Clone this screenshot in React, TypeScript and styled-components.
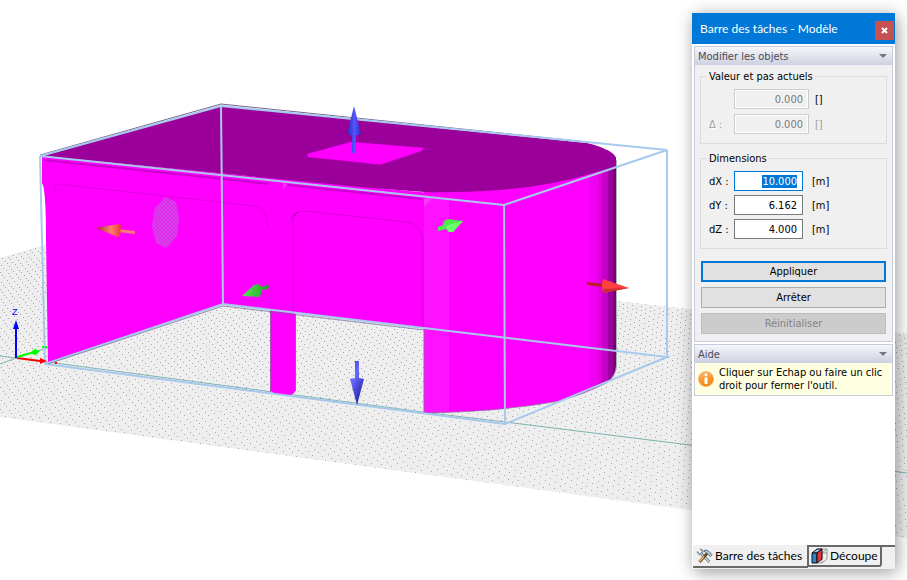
import { useEffect, useRef } from "react";
import styled, { createGlobalStyle, css } from "styled-components";

const GlobalStyle = createGlobalStyle`
  *, *::before, *::after { box-sizing: border-box; }
  html, body, #root { height: 100%; }
  body { margin: 0; background: #fff; overflow: hidden; }
`;

const uiFont = css`
  font-family: "DejaVu Sans Condensed", "Noto Sans", sans-serif;
  font-size: 11px;
  line-height: 13px;
`;

const titleFont = css`
  font-family: Lato, "Open Sans", sans-serif;
  font-size: 12px;
  line-height: 16px;
`;

/* ---------- Layout ---------- */

const Workspace = styled.main`
  position: relative;
  height: 100vh;
  min-height: 480px;
  overflow: hidden;
  background: #fff;
`;

const Scene = styled.svg`
  display: block;
  width: 100%;
  height: 100%;
`;

const ToolWindow = styled.aside`
  ${uiFont}
  position: absolute;
  top: 13px;
  right: 12px;
  bottom: 11px;
  width: 203px;
  display: flex;
  flex-direction: column;
  background: #fff;
  color: #000;
  box-shadow: 2px 3px 16px rgba(0, 0, 0, 0.4);
`;

const TitleBar = styled.header`
  ${titleFont}
  flex: none;
  display: flex;
  align-items: center;
  justify-content: space-between;
  height: 31px;
  padding: 0 1px 0 8px;
  background: #0078d7;
  color: #fff;
`;

const Title = styled.h1`
  margin: 0;
  font: inherit;
  white-space: nowrap;
`;

const CloseButton = styled.button`
  display: grid;
  place-items: center;
  width: 19px;
  height: 19px;
  margin-top: 3px;
  padding: 0;
  border: 0;
  background: #c75050;
`;

const Sections = styled.div`
  flex: 1;
  display: flex;
  flex-direction: column;
  gap: 2px;
  padding: 2px 2px 0;
`;

const Section = styled.section`
  border: 1px solid #c8cbdc;
  background: #f0f0f0;
`;

const SectionHeader = styled.button`
  ${uiFont}
  display: flex;
  align-items: center;
  justify-content: space-between;
  width: 100%;
  height: 18px;
  padding: 0 5px 0 3px;
  border: 0;
  background: linear-gradient(#f6f7fb, #cdd1e0);
  color: #4a4a55;
`;

const Chevron = styled.span`
  border: 4px solid transparent;
  border-top-color: #77777f;
  border-bottom: 0;
`;

const Form = styled.form`
  display: flex;
  flex-direction: column;
  padding: 5px 5px 7px;
`;

const Group = styled.fieldset<{ $rowGap: number }>`
  display: grid;
  grid-template-columns: 25px max-content 1fr;
  align-items: center;
  row-gap: ${(p) => p.$rowGap}px;
  min-width: 0;
  margin: 0 0 8px;
  padding: 6px 8px 9px;
  border: 1px solid #dcdcdc;
`;

const Legend = styled.legend`
  margin-left: -2px;
  padding: 0 2px;
`;

const FieldLabel = styled.label<{ $muted?: boolean }>`
  color: ${(p) => (p.$muted ? "#a0a0a0" : "#000")};
  text-shadow: ${(p) => (p.$muted ? "1px 1px #fff" : "none")};
`;

const Unit = styled.span<{ $muted?: boolean; $near?: boolean }>`
  padding-left: ${(p) => (p.$near ? 6 : 9)}px;
  color: ${(p) => (p.$muted ? "#a0a0a0" : "#000")};
`;

const NumberBox = styled.input<{ $wide?: boolean }>`
  ${uiFont}
  width: ${(p) => (p.$wide ? 75 : 69)}px;
  height: 20px;
  padding: 0 5px;
  border: 1px solid #7a7a7a;
  border-radius: 0;
  outline: 0;
  background: #fff;
  color: #000;
  text-align: right;

  &:focus { border-color: #0078d7; }
  &::selection { background: #0078d7; color: #fff; }
  &:disabled {
    border-color: #ccc;
    background: #f0f0f0;
    box-shadow: inset 0 0 0 1px #fff;
    color: #7a7a7a;
  }
`;

const Actions = styled.div`
  display: flex;
  flex-direction: column;
  gap: 5px;
  padding: 4px 1px 0;
`;

const ActionButton = styled.button<{ $primary?: boolean }>`
  ${uiFont}
  height: 21px;
  padding: 0;
  border: ${(p) => (p.$primary ? "2px solid #0078d7" : "1px solid #adadad")};
  background: #e1e1e1;
  color: #000;

  &:disabled { border-color: #bfbfbf; background: #ccc; color: #838383; }
`;

const Hint = styled.p`
  display: flex;
  align-items: center;
  gap: 5px;
  margin: 0;
  padding: 3px;
  background: #ffffe1;
  white-space: nowrap;
`;

const Tabs = styled.nav`
  ${titleFont}
  flex: none;
  display: flex;
  align-items: flex-start;
  height: 24px;
  padding-left: 1px;
  background: linear-gradient(90deg, #fff 1px, #f0f0f0 1px);
`;

const Tab = styled.button<{ $active?: boolean }>`
  ${titleFont}
  display: flex;
  align-items: center;
  gap: 2px;
  height: ${(p) => (p.$active ? 23 : 22)}px;
  padding: ${(p) => (p.$active ? "0 5px 0 3px" : "0 2px")};
  border: 1px solid #696969;
  border-width: ${(p) => (p.$active ? "0 1px 2px 0" : "2px 2px 2px 1px")};
  border-radius: ${(p) => (p.$active ? "0" : "0 0 3px 0")};
  background: #f0f0f0;
  color: #000;
  white-space: nowrap;
`;

const TabRule = styled.span`
  flex: 1;
  border-top: 2px solid #696969;
`;

/* ---------- Ground grid ---------- */

type Point = [number, number];

const baseCorners: Point[] = [
  [45, 364],
  [505, 424],
  [667, 357],
  [223, 304],
];

/* Projects plan coordinates (unit square = footprint of the box) to the view. */
function makeProjection([p0, p1, p2, p3]: Point[]) {
  const dx1 = p1[0] - p2[0], dy1 = p1[1] - p2[1];
  const dx2 = p3[0] - p2[0], dy2 = p3[1] - p2[1];
  const sx = p0[0] - p1[0] + p2[0] - p3[0];
  const sy = p0[1] - p1[1] + p2[1] - p3[1];
  const det = dx1 * dy2 - dx2 * dy1;
  const g = (sx * dy2 - dx2 * sy) / det;
  const h = (dx1 * sy - sx * dy1) / det;
  return (u: number, v: number): Point => {
    const w = g * u + h * v + 1;
    return [
      ((p1[0] - p0[0] + g * p1[0]) * u + (p3[0] - p0[0] + h * p3[0]) * v + p0[0]) / w,
      ((p1[1] - p0[1] + g * p1[1]) * u + (p3[1] - p0[1] + h * p3[1]) * v + p0[1]) / w,
    ];
  };
}

const project = makeProjection(baseCorners);

function gridDots() {
  let path = "";
  for (let i = -75; i <= 135; i++) {
    for (let j = -55; j <= 95; j++) {
      const [x, y] = project(i / 50, j / 30.81);
      if (x > -2 && x < 910 && y > 236 && y < 545) {
        path += `M${Math.round(x)} ${Math.round(y)}h1v1h-1z`;
      }
    }
  }
  return path;
}

const dots = gridDots();

/* ---------- Drawings ---------- */

function Viewport() {
  return (
    <Scene viewBox="0 0 907 580" preserveAspectRatio="xMinYMin slice" role="img" aria-label="Modèle 3D">
      <defs>
        <clipPath id="ground">
          <path d="M0 258 L45 245 L617 301 L907 334 V538 L690 510 L430 475 L0 417 Z" />
        </clipPath>
        <clipPath id="body">
          <path d="M42 156 L221 106 L587 143 Q612 149 616 158 V365 Q616 376 606 383 Q585 394 560 401 Q500 412 424 413 V150 Z" />
        </clipPath>
        <linearGradient id="blueUp" x1="0" x2="1">
          <stop offset="0" stopColor="#2929b8" />
          <stop offset="0.55" stopColor="#5555ff" />
          <stop offset="1" stopColor="#2d2dc0" />
        </linearGradient>
        <linearGradient id="blueDown" x1="0" y1="0" x2="0.6" y2="1">
          <stop offset="0" stopColor="#3a3acc" />
          <stop offset="0.4" stopColor="#6a6aff" />
          <stop offset="1" stopColor="#2020a0" />
        </linearGradient>
        <linearGradient id="redLeft" x1="0" x2="1">
          <stop offset="0" stopColor="#a02d20" />
          <stop offset="0.6" stopColor="#ff8070" />
          <stop offset="1" stopColor="#e83838" />
        </linearGradient>
        <linearGradient id="greenLeft" x1="0" x2="1">
          <stop offset="0" stopColor="#55e855" />
          <stop offset="1" stopColor="#22a022" />
        </linearGradient>
        <pattern id="mesh" width="4" height="4" patternUnits="userSpaceOnUse">
          <path d="M0 0L4 4M4 0L0 4" stroke="#c060e0" strokeWidth="1" opacity="0.4" />
        </pattern>
      </defs>

      {/* Ground plane */}
      <g clipPath="url(#ground)">
        <path d="M0 236H907V545H0Z" fill="#eee" />
        <path d={dots} fill="#a6a6a6" shapeRendering="crispEdges" />
      </g>
      <g stroke="#7fb3b0" fill="none">
        <path d="M0 356 L47 362 L430 413 L505 422 L690 445 L907 473" />
        <path d="M0 364 L16 358 L47 348" />
      </g>

      {/* Walls */}
      <g fill="#f0f">
        <path d="M42 156 L504 200 L424 328 L223 304 L48 363 L46 240 Q46 188 42 183 Z" />
        <path d="M270 308 H295 V391 Q294 395 288 395 L275 394 L271 391 Z" />
      </g>
      <g clipPath="url(#body)">
        <path d="M424 150H617V420H424Z" fill="#f0f" />
        <path d="M424 198H449V420H424Z" fill="#ff12ff" />
        <path d="M590 150h11v270h-11z" fill="#f000f0" />
        <path d="M598 150h4v270h-4z" fill="#e200e2" />
        <path d="M602 150h6v270h-6z" fill="#c400c4" />
        <path d="M608 150h5v270h-5z" fill="#9c009c" />
        <path d="M613 150h4v270h-4z" fill="#750075" />
      </g>

      {/* Roof */}
      <path d="M42 156 L221 106 L587 143 Q612 149 616 159 V166 L590 174 Q550 186 500 190 Q455 193 424 192 L360 187 Z" fill="#9b009b" />
      <path d="M301 157 L350 141 L433 148 L380 166 Z" fill="#a900a9" />
      <path d="M307 154 L351 142 L424 148 L421 151 L382 164 Q377 165 367 163 L308 157 Z" fill="#f0f" />

      {/* Facade relief */}
      <g fill="none" stroke="#cc00cc">
        <path d="M44 160 L269 184 M287 185 L422 199" strokeWidth="2" />
        <path d="M54 191 L58 184 L255 206 Q267 208 268 227" stroke="#e000e0" />
        <path d="M293 313 V222 Q294 210 305 211 L407 222 Q422 226 423 240 V328" stroke="#dc00dc" />
        <path d="M291 219 L297 212" stroke="#a000a0" />
        <path d="M424 413 V329 M270.5 310 V392 M295.5 314 V391" stroke="#a455bb" />
      </g>
      <path d="M283 183 L288 184 L283 190 Z M424 199 L434 196 L424 207Z" fill="#ff55ff" opacity="0.5" />
      <path d="M165 197 L176 202 L179 218 L177 236 L166 248 L156 243 L152 226 L155 208 Z" fill="#e22cec" />
      <path d="M165 197 L176 202 L179 218 L177 236 L166 248 L156 243 L152 226 L155 208 Z" fill="url(#mesh)" />
      <path d="M616.5 160 V367 Q615 378 606 383 Q585 394 560 401 Q500 412 424 413" fill="none" stroke="#718b83" opacity="0.6" />
      <path d="M40 155 L221 104 L587 142" fill="none" stroke="#75658c" />

      {/* Bounding box */}
      <path
        d="M40 156 L221 106 L667 150 L504 205 Z M45 364 L223 304 L667 357 L505 424 Z M40 156 L45 364 M221 106 L223 304 M667 150 V357 M504 205 L505 424"
        fill="none"
        stroke="#a8c9ee"
        strokeWidth="2"
      />
      <path d="M48 364 L223 306 L424 330" fill="none" stroke="#74659c" opacity="0.7" />

      {/* Resize handles */}
      <path d="M352 133 H356 V153 H352Z M347 134 L354 106 L361 134 Q354 137 347 134Z" fill="url(#blueUp)" />
      <path d="M355 361 H359 V382 H355Z M350 379 Q357 377 364 379 L357 405Z" fill="url(#blueDown)" />
      <path d="M117 229 L135 231 V234 L117 232Z" fill="#ff7878" />
      <path d="M96 228 L119 224 L121 225 L120 236 L118 237Z" fill="url(#redLeft)" />
      <path d="M587 282 L604 284 V287 L587 285Z" fill="#b82020" />
      <path d="M603 279 L629 288 L603 293 Q601 286 603 279Z" fill="#ff4040" />
      <path d="M603 289 L629 288 L603 293Z" fill="#c83030" />
      <path d="M242 296 L254 285 L258 284 L262 287 L266 285 L269 286 L268 289 L262 290 L260 297Z" fill="url(#greenLeft)" />
      <path d="M463 221 L448 219 L444 221 L443 225 L438 227 V231 L446 229 L449 232 L453 232Z" fill="#4fe84f" />
      <path d="M445 226 L463 221 L453 232 L449 232Z" fill="#6aff68" />

      {/* Coordinate axes */}
      <path d="M17 358 L40 361" stroke="red" strokeWidth="2" />
      <path d="M40 358 L47 361 L40 364Z M55 362h2v2h-2z" fill="red" />
      <path d="M17 357 L34 352" stroke="#0f0" strokeWidth="2" />
      <path d="M32 351 L35 349 L40 351 L36 355 L32 354Z M42 346h2v2h-2z M45 346h2v2h-2z" fill="#0f0" />
      <path d="M16 358 V328" stroke="#00f" strokeWidth="2" />
      <path d="M13 329 L16 320 L19 329Z" fill="#00f" />
      <text x="12" y="315" fill="#00f" fontFamily="Liberation Sans, sans-serif" fontSize="9">Z</text>
    </Scene>
  );
}

function CloseIcon() {
  return (
    <svg width="7" height="7" viewBox="0 0 7 7" aria-hidden="true">
      <path d="M1 1L6 6M6 1L1 6" stroke="#fff" strokeWidth="2" />
    </svg>
  );
}

function InfoIcon() {
  return (
    <svg width="16" height="16" viewBox="0 0 16 16" aria-hidden="true">
      <defs>
        <linearGradient id="info" x1="0" y1="0" x2="0.3" y2="1">
          <stop offset="0" stopColor="#ffc183" />
          <stop offset="0.5" stopColor="#fb9c3c" />
          <stop offset="1" stopColor="#f58a0c" />
        </linearGradient>
      </defs>
      <circle cx="8" cy="8" r="7.500" fill="url(#info)" stroke="#e9a052" strokeWidth="0.6" />
      <circle cx="8" cy="4" r="1.400" fill="#fff" />
      <path d="M6.500 6.500h3V13h-3z" fill="#fff" />
    </svg>
  );
}

function ToolsIcon() {
  return (
    <svg width="17" height="16" viewBox="0 0 17 16" fill="none" aria-hidden="true">
      <path d="M4.500 5L13.500 14" stroke="#66727e" strokeWidth="2.600" />
      <path d="M4.500 5L13.500 14" stroke="#d5dde5" strokeWidth="1.200" />
      <path d="M1 3.500L3.500 6.500L6.500 5.500L6 2L4 1" stroke="#8796a5" strokeWidth="1.600" />
      <path d="M3.500 14L11.500 5" stroke="#694c25" strokeWidth="2.800" />
      <path d="M3.500 13.500L8 8.500" stroke="#e2b767" strokeWidth="1.500" />
      <path d="M7.500 3Q10 1 12.500 3L16 6.500L14.500 8.500L11.500 6L9.500 4Z" fill="#b6c3d2" stroke="#53677f" strokeWidth="0.900" />
    </svg>
  );
}

function ClipIcon() {
  return (
    <svg width="17" height="16" viewBox="0 0 17 16" aria-hidden="true">
      <path d="M6 1H16V11L11 15H6M11 5H16M11 5L16 1M11 5V15" fill="none" stroke="#999" />
      <path d="M1 5L6 1H11L6 5Z" fill="#8ac6ee" stroke="#111" />
      <path d="M1 5H6V15H1Z" fill="#2d86c8" stroke="#111" />
      <path d="M6 5L11 1V11L6 15Z" fill="#f03038" stroke="#111" />
    </svg>
  );
}

/* ---------- Panel ---------- */

const dimensions = [
  { id: "dx", label: "dX :", value: "10.000" },
  { id: "dy", label: "dY :", value: "6.162" },
  { id: "dz", label: "dZ :", value: "4.000" },
];

export default function App() {
  const firstField = useRef<HTMLInputElement>(null);

  useEffect(() => {
    firstField.current?.focus();
    firstField.current?.select();
  }, []);

  return (
    <Workspace>
      <GlobalStyle />
      <Viewport />
      <ToolWindow>
        <TitleBar>
          <Title>Barre des tâches - Modèle</Title>
          <CloseButton type="button" aria-label="Fermer">
            <CloseIcon />
          </CloseButton>
        </TitleBar>
        <Sections>
          <Section>
            <SectionHeader type="button">
              Modifier les objets
              <Chevron />
            </SectionHeader>
            <Form onSubmit={(e) => e.preventDefault()}>
              <Group $rowGap={5}>
                <Legend>Valeur et pas actuels</Legend>
                <span />
                <NumberBox $wide disabled defaultValue="0.000" aria-label="Valeur" />
                <Unit $near>[]</Unit>
                <FieldLabel $muted htmlFor="step">Δ :</FieldLabel>
                <NumberBox $wide id="step" disabled defaultValue="0.000" />
                <Unit $muted $near>[]</Unit>
              </Group>
              <Group $rowGap={4}>
                <Legend>Dimensions</Legend>
                {dimensions.map((d, i) => [
                  <FieldLabel key={d.id} htmlFor={d.id}>{d.label}</FieldLabel>,
                  <NumberBox key={`${d.id}-box`} id={d.id} ref={i === 0 ? firstField : undefined} defaultValue={d.value} />,
                  <Unit key={`${d.id}-unit`}>[m]</Unit>,
                ])}
              </Group>
              <Actions>
                <ActionButton type="submit" $primary>Appliquer</ActionButton>
                <ActionButton type="button">Arrêter</ActionButton>
                <ActionButton type="button" disabled>Réinitialiser</ActionButton>
              </Actions>
            </Form>
          </Section>
          <Section>
            <SectionHeader type="button">
              Aide
              <Chevron />
            </SectionHeader>
            <Hint>
              <InfoIcon />
              <span>
                Cliquer sur Echap ou faire un clic
                <br />
                droit pour fermer l'outil.
              </span>
            </Hint>
          </Section>
        </Sections>
        <Tabs>
          <Tab type="button" $active>
            <ToolsIcon />
            Barre des tâches
          </Tab>
          <Tab type="button">
            <ClipIcon />
            Découpe
          </Tab>
          <TabRule />
        </Tabs>
      </ToolWindow>
    </Workspace>
  );
}
